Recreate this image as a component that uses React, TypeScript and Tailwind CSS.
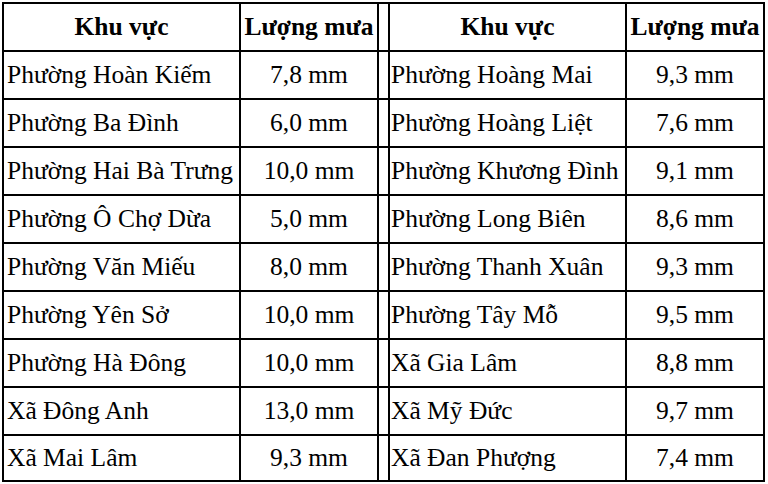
import React from "react";

const left: [string, string][] = [
  ["Phường Hoàn Kiếm", "7,8 mm"],
  ["Phường Ba Đình", "6,0 mm"],
  ["Phường Hai Bà Trưng", "10,0 mm"],
  ["Phường Ô Chợ Dừa", "5,0 mm"],
  ["Phường Văn Miếu", "8,0 mm"],
  ["Phường Yên Sở", "10,0 mm"],
  ["Phường Hà Đông", "10,0 mm"],
  ["Xã Đông Anh", "13,0 mm"],
  ["Xã Mai Lâm", "9,3 mm"],
];

const right: [string, string][] = [
  ["Phường Hoàng Mai", "9,3 mm"],
  ["Phường Hoàng Liệt", "7,6 mm"],
  ["Phường Khương Đình", "9,1 mm"],
  ["Phường Long Biên", "8,6 mm"],
  ["Phường Thanh Xuân", "9,3 mm"],
  ["Phường Tây Mỗ", "9,5 mm"],
  ["Xã Gia Lâm", "8,8 mm"],
  ["Xã Mỹ Đức", "9,7 mm"],
  ["Xã Đan Phượng", "7,4 mm"],
];

export default function App() {
  return (
    <div className="w-[768px] h-[484px] bg-white overflow-hidden pt-[2px] pl-[2px] font-['Liberation_Serif',serif] text-black text-[25.5px] leading-none">
      <div className="grid w-fit grid-cols-[235px_136px_9px_235px_136px] gap-[2px] bg-black p-[2px]">
        <div className="h-[46px] bg-white flex items-center justify-center font-bold whitespace-nowrap">Khu vực</div>
        <div className="h-[46px] bg-white flex items-center justify-center font-bold whitespace-nowrap">Lượng mưa</div>
        <div className="h-[46px] bg-white"></div>
        <div className="h-[46px] bg-white flex items-center justify-center font-bold whitespace-nowrap">Khu vực</div>
        <div className="h-[46px] bg-white flex items-center justify-center font-bold whitespace-nowrap">Lượng mưa</div>
        {left.map((l, i) => {
          const h = i === left.length - 1 ? "h-[44px]" : "h-[46px]";
          return (
            <React.Fragment key={i}>
              <div className={`${h} bg-white flex items-center pl-[3px] whitespace-nowrap`}>{l[0]}</div>
              <div className={`${h} bg-white flex items-center justify-center whitespace-nowrap`}>{l[1]}</div>
              <div className={`${h} bg-white`}></div>
              <div className={`${h} bg-white flex items-center pl-[1px] whitespace-nowrap`}>{right[i][0]}</div>
              <div className={`${h} bg-white flex items-center justify-center whitespace-nowrap`}>{right[i][1]}</div>
            </React.Fragment>
          );
        })}
      </div>
    </div>
  );
}
